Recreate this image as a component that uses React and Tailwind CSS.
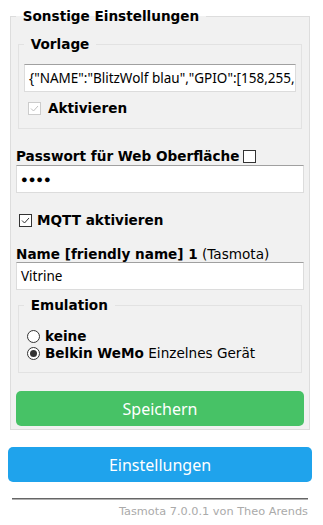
import React from 'react';
import clsx from 'clsx';

// Checkbox drawn by hand, the native one looks different in headless chrome
const Check = ({ checked = false, disabled = false }) => (
  <span
    className={clsx(
      'inline-flex h-[13px] w-[13px] shrink-0 items-center justify-center border bg-white',
      disabled ? 'border-[#cccccc]' : 'border-[#333333]'
    )}
  >
    {checked && (
      <svg viewBox="0 0 11 11" className="h-[11px] w-[11px]">
        <path
          d="M2 5.5 L4.5 8 L9 3"
          fill="none"
          stroke={disabled ? '#c0c0c0' : '#333333'}
          strokeWidth="1"
        />
      </svg>
    )}
  </span>
);

const Radio = ({ checked = false }) => (
  <span className="inline-flex h-[13px] w-[13px] shrink-0 items-center justify-center rounded-full border border-[#333333] bg-white">
    {checked && <span className="h-[7px] w-[7px] rounded-full bg-[#333333]" />}
  </span>
);

const TextInput = ({ value, password = false }) => (
  <div
    className={clsx(
      'flex h-[28px] w-full min-w-0 items-center overflow-hidden whitespace-nowrap border border-[#dcdcdc] border-t-[#a0a0a0] bg-white px-[4px] text-[13.5px] text-black',
      "font-['Noto_Sans',sans-serif]"
    )}
  >
    {password ? <span className="text-[11px] tracking-[1px]">●●●●</span> : value}
  </div>
);

const App = () => {
  return (
    <div className="min-h-screen bg-white font-['DejaVu_Sans',Verdana,sans-serif] text-[13.6px] text-black">
      <div className="ml-2 w-[304px] pt-2">
        <fieldset className="mx-[2px] min-w-0 border border-[#dddddd] bg-[#f1f1f1] px-[5px] pb-[3px]">
          <legend className="px-[2px] font-bold leading-[16px]">&nbsp;Sonstige Einstellungen&nbsp;</legend>

          <fieldset className="mx-[2px] mt-[12px] min-w-0 border border-[#e2e2e2] px-[5px] pb-[12px]">
            <legend className="px-[2px] font-bold leading-[16px]">&nbsp;Vorlage&nbsp;</legend>
            <div className="mt-[12px]">
              <TextInput value={'{"NAME":"BlitzWolf blau","GPIO":[158,255,'} />
            </div>
            <div className="mt-[8px] flex h-[16px] items-center gap-[7px] pl-[4px]">
              <Check checked disabled />
              <b>Aktivieren</b>
            </div>
          </fieldset>

          <div className="mt-[19px] flex h-[16px] items-center gap-[4px]">
            <b>Passwort für Web Oberfläche</b>
            <Check />
          </div>
          <div className="mt-[1px]">
            <TextInput password />
          </div>

          <div className="mt-[19px] flex h-[16px] items-center gap-[5px] pl-[3px]">
            <Check checked />
            <b>MQTT aktivieren</b>
          </div>

          <div className="mt-[18px] h-[16px] leading-[16px]">
            <b>Name [friendly name] 1</b> (Tasmota)
          </div>
          <TextInput value="Vitrine" />

          <fieldset className="mx-[2px] mt-[7px] min-w-0 border border-[#e2e2e2] px-[5px] pb-[10px]">
            <legend className="px-[2px] font-bold leading-[16px]">&nbsp;Emulation&nbsp;</legend>
            <div className="mt-[15px] flex h-[17px] items-center gap-[5px] pl-[3px]">
              <Radio />
              <b>keine</b>
            </div>
            <div className="flex h-[17px] items-center gap-[5px] pl-[3px]">
              <Radio checked />
              <span>
                <b>Belkin WeMo</b> Einzelnes Gerät
              </span>
            </div>
          </fieldset>

          <button
            type="button"
            className="mt-[18px] h-[35px] w-full rounded-[5px] bg-[#47c266] font-['Noto_Sans',sans-serif] text-[16px] text-white"
          >
            Speichern
          </button>
        </fieldset>

        <button
          type="button"
          className="mt-[17px] h-[35px] w-full rounded-[5px] bg-[#1fa3ec] font-['Noto_Sans',sans-serif] text-[16px] text-white"
        >
          Einstellungen
        </button>

        <div className="mx-[4px] mt-[16px] border-t border-b border-t-[#666666] border-b-[#b0b0b0]" />
        <div className="mx-[4px] mt-[5px] text-right text-[11.3px] leading-[14px] text-[#aaaaaa]">
          Tasmota 7.0.0.1 von Theo Arends
        </div>
      </div>
    </div>
  );
};

export default App;
